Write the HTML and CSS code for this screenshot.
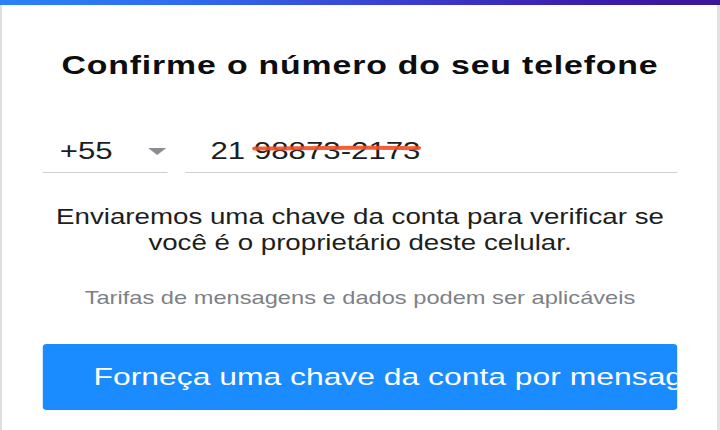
FILE: index.html
```html
<!DOCTYPE html>
<html lang="pt-BR">
<head>
<meta charset="utf-8">
<title>Confirme o número do seu telefone</title>
<link rel="stylesheet" href="styles.css">
</head>
<body>
<div class="topbar"></div>
<main class="frame">
  <div class="card">
    <h1 class="title">Confirme o número do seu telefone</h1>
    <div class="phone-row">
      <div class="country"><span>+55</span><span class="caret"></span></div>
      <div class="number"><span>21 </span><span class="masked">98873-2173<svg class="scribble" viewBox="0 0 130 8" preserveAspectRatio="none"><path d="M2 4.6 C 30 4.4, 60 3.6, 90 3.8 S 120 4.4, 128 4"/></svg></span></div>
    </div>
    <p class="info">Enviaremos uma chave da conta para verificar se você é o proprietário deste celular.</p>
    <p class="rates">Tarifas de mensagens e dados podem ser aplicáveis</p>
    <button class="submit" type="button">Forneça uma chave da conta por mensagem SMS</button>
  </div>
</main>
</body>
</html>
```
FILE: styles.css
```css
html, body {
  margin: 0;
  padding: 0;
  height: 100%;
  overflow: hidden;
  background: #ffffff;
}

body {
  font-family: "Liberation Sans", Arial, sans-serif;
  color: #1c1e21;
}

.topbar {
  height: 5px;
  background: linear-gradient(90deg, #2a82f8 0%, #2f6cf0 25%, #3a3fd0 55%, #3b1fae 80%, #3a1699 100%);
}

.frame {
  box-sizing: border-box;
  height: calc(100vh - 5px);
  border-left: 2px solid #dedede;
  border-right: 3px solid #e2e2e2;
}

.card {
  width: 488px;
  margin: 0 auto;
  padding-top: 45px;
  transform: scaleX(1.3);
  transform-origin: 50% 0;
}

.title {
  margin: 0;
  font-size: 26px;
  line-height: 31px;
  font-weight: bold;
  letter-spacing: 0.65px;
  text-align: center;
  color: #0d0d0d;
}

.phone-row {
  display: flex;
  gap: 14px;
  margin-top: 51px;
}

.country {
  box-sizing: border-box;
  width: 96px;
  display: flex;
  align-items: center;
  justify-content: space-between;
  padding: 5px 1px 7px 13px;
  border-bottom: 1px solid #ccd0d5;
  font-size: 24px;
  line-height: 28px;
  color: #1c1e21;
}

.caret {
  width: 0;
  height: 0;
  border-left: 7px solid transparent;
  border-right: 7px solid transparent;
  border-top: 7px solid #8a8d91;
  margin-top: 1px;
}

.number {
  flex: 1;
  padding: 5px 0 7px 19px;
  border-bottom: 1px solid #ccd0d5;
  font-size: 24px;
  line-height: 28px;
  color: #1c1e21;
  white-space: nowrap;
}

.masked {
  position: relative;
  display: inline-block;
}

.scribble {
  position: absolute;
  left: -1px;
  top: 7px;
  width: 130px;
  height: 8px;
  overflow: visible;
}

.scribble path {
  fill: none;
  stroke: #f24e24;
  stroke-width: 4;
  stroke-linecap: round;
  opacity: 0.9;
}

.info {
  margin: 31px 0 0;
  font-size: 21.3px;
  line-height: 26px;
  text-align: center;
  color: #1c1e21;
}

.rates {
  margin: 31px 0 0;
  font-size: 18.2px;
  line-height: 22px;
  text-align: center;
  color: #7d8187;
}

.submit {
  display: block;
  width: 100%;
  height: 66px;
  margin-top: 35px;
  padding: 0 0 0 39px;
  border: 0;
  border-radius: 3px;
  background: #1a8cff;
  color: #ffffff;
  font-family: "Liberation Sans", Arial, sans-serif;
  font-size: 24.5px;
  text-align: left;
  white-space: nowrap;
  overflow: hidden;
}
```
